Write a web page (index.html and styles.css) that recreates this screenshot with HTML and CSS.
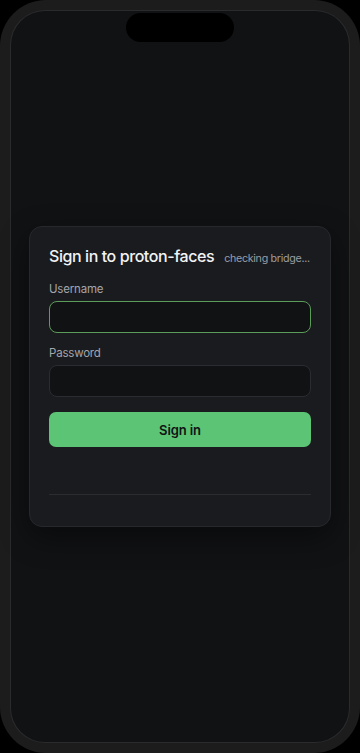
FILE: index.html
```html
<!DOCTYPE html>
<html lang="en">
<head>
    <meta charset="UTF-8">
    <meta name="viewport" content="width=device-width, initial-scale=1.0">
    <title>Sign in to proton-faces</title>
    <link rel="stylesheet" href="styles.css">
</head>
<body>
    <div class="phone">
        <div class="screen">
            <div class="notch"></div>

            <form class="login-card" onsubmit="return false;">
                <div class="card-header">
                    <h1>Sign in to proton-faces</h1>
                    <span class="status">checking bridge...</span>
                </div>

                <label class="field-label" for="username">Username</label>
                <input type="text" id="username" class="field-input focused">

                <label class="field-label" for="password">Password</label>
                <input type="password" id="password" class="field-input">

                <button type="submit" class="sign-in-btn">Sign in</button>

                <p class="message"></p>
                <div class="divider"></div>
            </form>
        </div>
    </div>
</body>
</html>
```

FILE: styles.css
```css
/* page + device frame */
* {
    box-sizing: border-box;
}

body {
    margin: 0;
    background-color: #000;
    font-family: Inter, "Noto Sans", sans-serif;
}

.phone {
    width: 360px;
    height: 753px;
    padding: 11px;
    background-color: #1c1c1d;
    border-radius: 46px;
}

.screen {
    position: relative;
    height: 100%;
    background-color: #111214;
    border-radius: 34px;
    box-shadow: 0 0 0 1px #2a2b2d;
    display: flex;
    flex-direction: column;
    justify-content: center;
    padding: 0 18px;
}

.notch {
    position: absolute;
    top: 2px;
    left: 115px;
    width: 108px;
    height: 29px;
    background-color: #000;
    border-radius: 15px;
}

/* login card */
.login-card {
    background-color: #1a1b1f;
    border: 1px solid #26282c;
    border-radius: 13px;
    padding: 19px 19px 31px;
    box-shadow: 0 10px 30px rgba(0, 0, 0, 0.45);
}

.card-header {
    display: flex;
    align-items: baseline;
    gap: 10px;
    height: 22px;
    margin-bottom: 13px;
}

h1 {
    margin: 0;
    font-size: 16px;
    font-weight: 500;
    letter-spacing: -0.42px;
    color: #f2f3f5;
    white-space: nowrap;
}

.status {
    font-size: 10.7px;
    letter-spacing: -0.3px;
    color: #9b9da3;
    white-space: nowrap;
}

.field-label {
    display: block;
    font-size: 11.5px;
    letter-spacing: -0.2px;
    line-height: 16px;
    color: #a3a5ab;
    margin-bottom: 4px;
}

.field-input {
    display: block;
    width: 100%;
    height: 32px;
    margin: 0 0 12px;
    background-color: #111214;
    border: 1px solid #2a2c31;
    border-radius: 8px;
    color: #f2f3f5;
    font-size: 13px;
    padding: 0 10px;
    outline: none;
}

.field-input.focused {
    border-color: #5c9c5a;
}

.sign-in-btn {
    display: block;
    width: 100%;
    height: 35px;
    margin-top: 15px;
    background-color: #5bc475;
    border: none;
    border-radius: 7px;
    color: #111214;
    font-family: inherit;
    font-size: 13px;
    font-weight: 600;
    letter-spacing: -0.1px;
    cursor: pointer;
}

.message {
    margin: 0;
    height: 47px;
}

.divider {
    height: 1px;
    background-color: #2a2c31;
}
```
